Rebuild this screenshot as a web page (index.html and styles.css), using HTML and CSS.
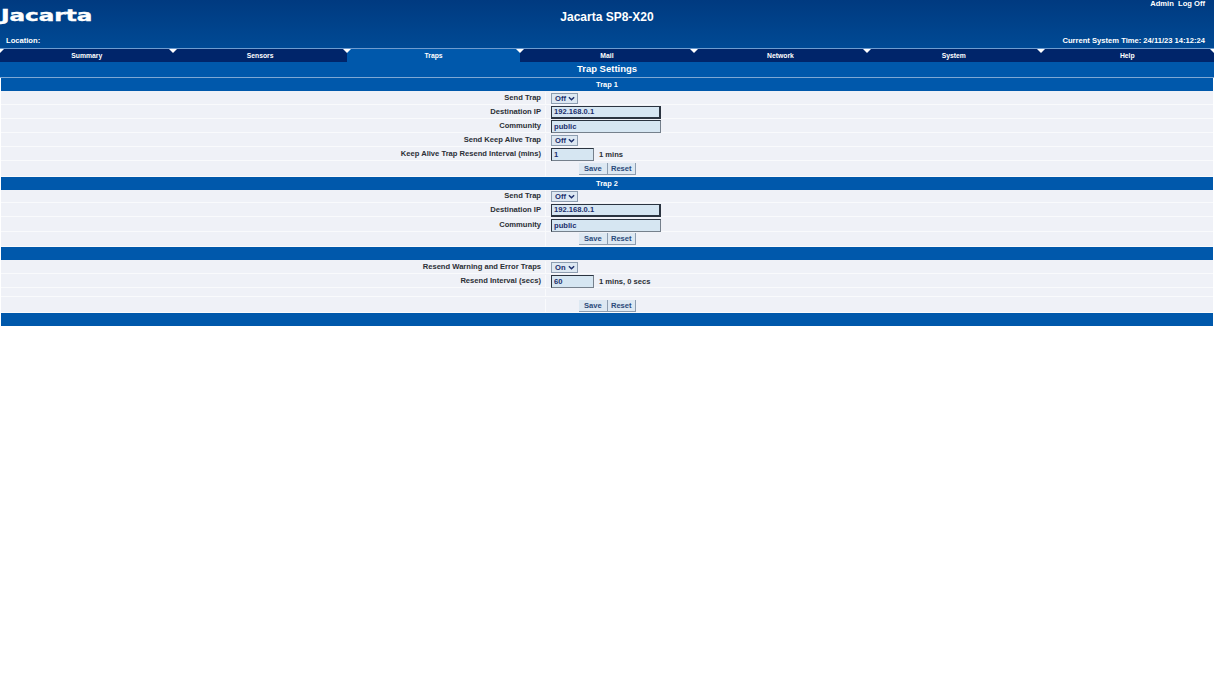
FILE: index.html
```html
<!DOCTYPE html>
<html lang="en">
<head>
    <meta charset="UTF-8">
    <title>Jacarta SP8-X20 - Trap Settings</title>
    <link rel="stylesheet" href="styles.css">
</head>
<body>
    <div class="header">
        <div class="logo">Jacarta</div>
        <div class="title">Jacarta SP8-X20</div>
        <div class="user">Admin&nbsp; Log Off</div>
        <div class="location">Location:</div>
        <div class="time">Current System Time: 24/11/23 14:12:24</div>
    </div>
    <div class="nav">
        <a class="tab">Summary</a>
        <a class="tab">Sensors</a>
        <a class="tab active">Traps</a>
        <a class="tab">Mail</a>
        <a class="tab">Network</a>
        <a class="tab">System</a>
        <a class="tab">Help</a>
    </div>
    <div class="page-title">Trap Settings</div>
    <div class="settings">
        <div class="band">Trap 1</div>
        <div class="row"><label>Send Trap</label><div class="field"><span class="select">Off<svg viewBox="0 0 8 5"><path d="M1 1l3 3 3-3"/></svg></span></div></div>
        <div class="row"><label>Destination IP</label><div class="field"><input class="wide focus" value="192.168.0.1"></div></div>
        <div class="row"><label>Community</label><div class="field"><input class="wide" value="public"></div></div>
        <div class="row"><label>Send Keep Alive Trap</label><div class="field"><span class="select">Off<svg viewBox="0 0 8 5"><path d="M1 1l3 3 3-3"/></svg></span></div></div>
        <div class="row"><label>Keep Alive Trap Resend Interval (mins)</label><div class="field"><input class="short" value="1"><span class="note">1 mins</span></div></div>
        <div class="row btn-row"><label></label><div class="field buttons"><button>Save</button><button>Reset</button></div></div>
        <div class="band">Trap 2</div>
        <div class="row first"><label>Send Trap</label><div class="field"><span class="select">Off<svg viewBox="0 0 8 5"><path d="M1 1l3 3 3-3"/></svg></span></div></div>
        <div class="row"><label>Destination IP</label><div class="field"><input class="wide focus" value="192.168.0.1"></div></div>
        <div class="row tall"><label>Community</label><div class="field"><input class="wide" value="public"></div></div>
        <div class="row btn-row mid"><label></label><div class="field buttons"><button>Save</button><button>Reset</button></div></div>
        <div class="band"></div>
        <div class="row"><label>Resend Warning and Error Traps</label><div class="field"><span class="select">On<svg viewBox="0 0 8 5"><path d="M1 1l3 3 3-3"/></svg></span></div></div>
        <div class="row"><label>Resend Interval (secs)</label><div class="field"><input class="short" value="60"><span class="note">1 mins, 0 secs</span></div></div>
        <div class="row spacer"><label></label><div class="field"></div></div>
        <div class="row btn-row last"><label></label><div class="field buttons"><button>Save</button><button>Reset</button></div></div>
        <div class="band"></div>
    </div>
</body>
</html>
```

FILE: styles.css
```css
body {
    margin: 0;
    background: white;
    color: #2b2f36;
    font-family: "Liberation Sans", Arial, sans-serif;
    font-size: 7.6px;
    font-weight: bold;
}
.header {
    position: relative;
    height: 48px;
    background: linear-gradient(#003a80, #004a95);
    color: white;
}
.logo {
    position: absolute;
    left: 1px;
    top: 6px;
    font-family: "DejaVu Sans", sans-serif;
    font-size: 16px;
    line-height: 20px;
    -webkit-text-stroke: 0.4px white;
    transform: scaleX(1.44);
    transform-origin: left;
}
.title {
    text-align: center;
    font-size: 12px;
    line-height: 34px;
}
.user {
    position: absolute;
    right: 9px;
    top: 0;
    line-height: 8px;
}
.location {
    position: absolute;
    left: 6px;
    top: 36px;
    line-height: 10px;
}
.time {
    position: absolute;
    right: 9px;
    top: 36px;
    line-height: 10px;
}
.nav {
    display: flex;
    height: 13px;
    border-top: 1px solid #6f9ccf;
    background: #00256a;
    color: white;
}
.tab {
    position: relative;
    flex: 1;
    text-align: center;
    line-height: 13px;
    font-size: 6.8px;
}
.tab.active {
    background: #0058ab;
}
.tab::after {
    content: "";
    position: absolute;
    right: -4px;
    top: 0;
    border-left: 4px solid transparent;
    border-right: 4px solid transparent;
    border-top: 4px solid white;
    z-index: 1;
}
.tab:first-child::before {
    content: "";
    position: absolute;
    left: -4px;
    top: 0;
    border-left: 4px solid transparent;
    border-right: 4px solid transparent;
    border-top: 4px solid white;
}
.page-title {
    height: 15px;
    background: #0058ab;
    color: white;
    text-align: center;
    font-size: 9.5px;
    line-height: 14px;
    border-bottom: 1px solid #7fa8d4;
}
.settings {
    margin: 0 1px;
}
.band {
    height: 13px;
    background: #0058ab;
    color: white;
    text-align: center;
    font-size: 7.4px;
    line-height: 13px;
}
.row {
    display: flex;
    box-sizing: border-box;
    height: 14px;
    padding-top: 1px;
    background: #eff1f7;
    border-bottom: 1px solid #f9fafc;
}
.row.first {
    height: 13px;
    padding-top: 0;
}
.row.tall {
    height: 15px;
    padding-top: 2px;
}
.row.btn-row {
    height: 16px;
    padding-top: 0;
}
.row.btn-row.mid {
    height: 15px;
}
.row.btn-row.last {
    padding-top: 2px;
}
.row.spacer {
    height: 9px;
}
.row label {
    box-sizing: border-box;
    width: 545px;
    padding-right: 4px;
    text-align: right;
    line-height: 12px;
    border-right: 1px solid #f9fafc;
}
.field {
    display: flex;
    align-items: center;
    margin-left: 5px;
}
.select {
    display: flex;
    align-items: center;
    justify-content: space-between;
    box-sizing: border-box;
    width: 27px;
    height: 11px;
    padding: 0 2px 0 3px;
    background: #dde8f2;
    border: 1px solid #8d9db0;
    color: #1c2f6c;
}
.select svg {
    width: 7px;
    height: 5px;
    fill: none;
    stroke: #1c2f6c;
    stroke-width: 1.6;
}
input {
    box-sizing: border-box;
    height: 13px;
    padding: 0 2px;
    background: #d6e6f2;
    border: 1px solid #75808c;
    border-top-color: #2b3440;
    border-left-color: #2b3440;
    color: #1c2f6c;
    font: inherit;
}
input.focus {
    border: 2px solid #2b3440;
    border-top-width: 1px;
    border-left-width: 1px;
}
input.wide {
    width: 110px;
}
input.short {
    width: 43px;
}
.note {
    margin-left: 5px;
}
.buttons {
    margin-left: 33px;
}
button {
    box-sizing: border-box;
    width: 28.5px;
    height: 12px;
    margin: 0;
    padding: 0;
    background: #dde8f2;
    border: 0;
    border-right: 1px solid #8d9db0;
    border-bottom: 1px solid #8d9db0;
    color: #2a4a7a;
    font: inherit;
}
```
